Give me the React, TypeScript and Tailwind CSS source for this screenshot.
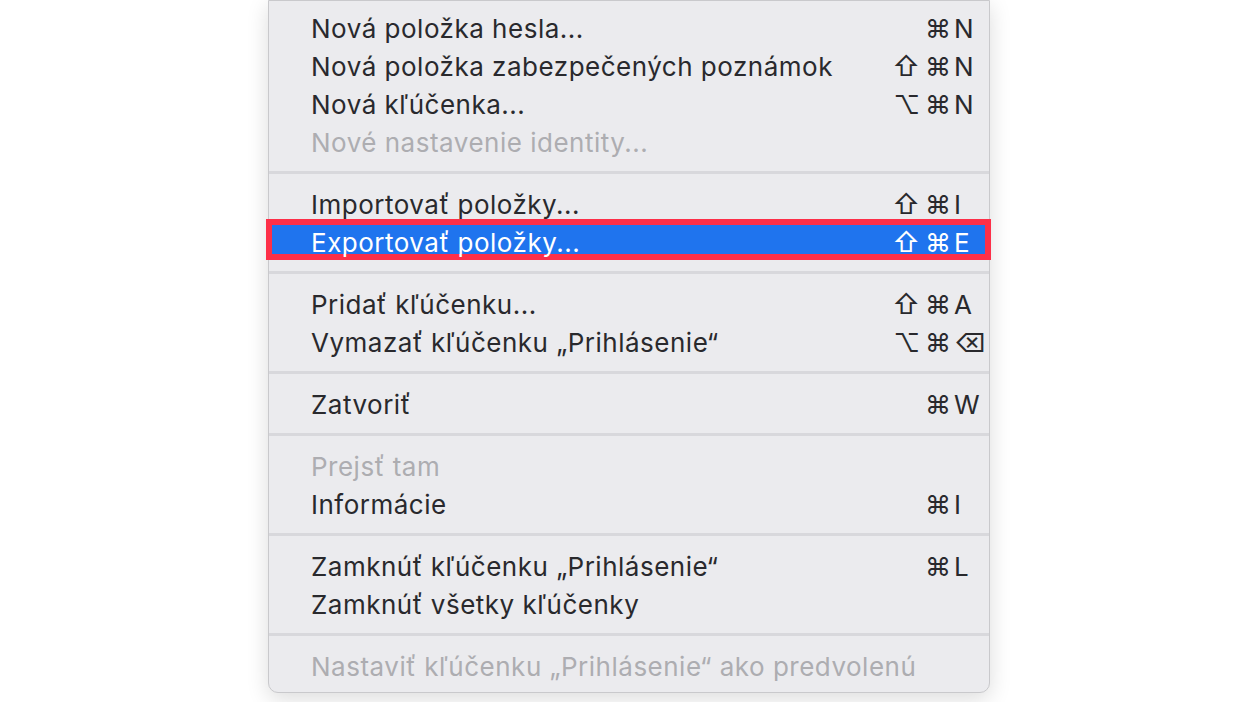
type Item = {
  label: string;
  mods?: string;
  keyChar?: string;
  disabled?: boolean;
  selected?: boolean;
};

const groups: Item[][] = [
  [
    { label: "Nová položka hesla...", mods: "⌘", keyChar: "N" },
    { label: "Nová položka zabezpečených poznámok", mods: "⇧⌘", keyChar: "N" },
    { label: "Nová kľúčenka...", mods: "⌥⌘", keyChar: "N" },
    { label: "Nové nastavenie identity...", disabled: true },
  ],
  [
    { label: "Importovať položky...", mods: "⇧⌘", keyChar: "I" },
    { label: "Exportovať položky...", mods: "⇧⌘", keyChar: "E", selected: true },
  ],
  [
    { label: "Pridať kľúčenku...", mods: "⇧⌘", keyChar: "A" },
    { label: "Vymazať kľúčenku „Prihlásenie“", mods: "⌥⌘", keyChar: "⌫" },
  ],
  [{ label: "Zatvoriť", mods: "⌘", keyChar: "W" }],
  [
    { label: "Prejsť tam", disabled: true },
    { label: "Informácie", mods: "⌘", keyChar: "I" },
  ],
  [
    { label: "Zamknúť kľúčenku „Prihlásenie“", mods: "⌘", keyChar: "L" },
    { label: "Zamknúť všetky kľúčenky" },
  ],
  [{ label: "Nastaviť kľúčenku „Prihlásenie“ ako predvolenú", disabled: true }],
];

function Row({ item }: { item: Item }) {
  const color = item.selected
    ? "text-white"
    : item.disabled
      ? "text-[#adadb1]"
      : "text-[#29292d]";

  return (
    <div className={`relative flex h-[38px] items-center pt-[2px] ${color}`}>
      {/* highlight drawn over the row */}
      {item.selected && (
        <div className="absolute -top-[3px] bottom-0 -left-[3px] -right-[2px] border-[6px] border-[#fd2f48] bg-[#1f74ee]" />
      )}
      <span className="relative flex-1 pl-[42px] tracking-[0.5px]">{item.label}</span>
      {item.mods && (
        <span className="relative flex w-[80px] items-center justify-end gap-[5px]">
          {item.mods.split("").map((m, i) => (
            <span key={i} className={m === "⇧" ? "text-[27px] leading-none" : ""}>
              {m}
            </span>
          ))}
        </span>
      )}
      <span className="relative w-[38px] pl-[3px]">{item.keyChar}</span>
    </div>
  );
}

export default function App() {
  return (
    <div className="min-h-[702px] bg-white pl-[268px]">
      <div
        className="w-[722px] rounded-b-[10px] border border-[#c9c9cc] bg-[#ebebee] pb-[8px] pt-[7px] text-[26px] shadow-[0_6px_22px_rgba(0,0,0,0.14)]"
        style={{ fontFamily: "Inter, 'DejaVu Sans', sans-serif" }}
      >
        {groups.map((g, gi) => (
          <div key={gi}>
            {gi > 0 && (
              <div className="flex h-[24px] items-center">
                <div className="h-[3px] w-full bg-[#d8d8dc]" />
              </div>
            )}
            {g.map((it, ii) => (
              <Row key={ii} item={it} />
            ))}
          </div>
        ))}
      </div>
    </div>
  );
}
